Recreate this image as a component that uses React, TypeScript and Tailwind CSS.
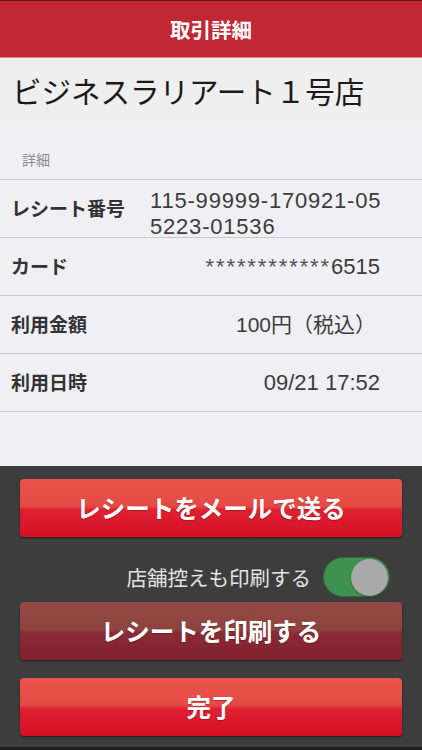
import React from "react";

const jp = { fontFamily: '"Noto Sans CJK JP", "Liberation Sans", sans-serif' };
const num = { fontFamily: '"Liberation Sans", "Noto Sans CJK JP", sans-serif' };

function Row({ label, children, align = "right" }: { label: string; children: React.ReactNode; align?: "left" | "right" }) {
  return (
    <div className="flex h-[58px] items-center border-b border-[#c8c7cc]">
      <div className="w-[150px] shrink-0 pl-[11px] text-[19px] font-bold text-[#333]" style={jp}>
        {label}
      </div>
      <div
        className={`w-[230px] shrink-0 whitespace-nowrap text-[22px] leading-[26px] text-[#3c3c3c] ${align === "left" ? "text-left" : "text-right"}`}
        style={num}
      >
        {children}
      </div>
    </div>
  );
}

function Btn({ children, dark = false }: { children: React.ReactNode; dark?: boolean }) {
  return (
    <button
      className={`mx-5 flex h-[58px] items-center justify-center rounded-[4px] text-[24.5px] font-bold text-white shadow-[0_1px_2px_rgba(0,0,0,0.5)] ${
        dark
          ? "bg-[linear-gradient(to_bottom,#934a44_0%,#8e433f_47%,#892b35_53%,#84202d_100%)]"
          : "bg-[linear-gradient(to_bottom,#e9544c_0%,#e44a43_47%,#de2131_53%,#d70f27_100%)]"
      }`}
      style={{ ...jp, textShadow: "0 1px 1px rgba(0,0,0,0.25)" }}
    >
      {children}
    </button>
  );
}

export default function App() {
  return (
    <div className="flex h-[750px] w-[422px] flex-col overflow-hidden bg-[#efeff4]" style={jp}>
      <div className="flex h-[58px] items-center justify-center border-t border-[#5a1218] border-b border-b-[#d9858a] bg-[#c22833]">
        <span className="text-[20.5px] font-bold text-white">取引詳細</span>
      </div>
      <div className="flex h-[64px] items-center bg-[#efefef] pl-[12px] text-[29.5px] text-[#1a1a1a]">
        ビジネスラリアート１号店
      </div>
      <div className="flex h-[58px] items-end border-b border-[#c8c7cc] pb-[9px] pl-[22px] text-[14px] text-[#8a8a8e]">
        詳細
      </div>
      <Row label="レシート番号" align="left">
        <div className="pt-[11px] tracking-[0.8px]">
          115-99999-170921-05
          <br />
          5223-01536
        </div>
      </Row>
      <Row label="カード">
        <span className="tracking-[1.9px] text-[#555]">************</span>6515
      </Row>
      <Row label="利用金額">
        <span className="pr-[4px] text-[21px]">100円（税込）</span>
      </Row>
      <Row label="利用日時">09/21 17:52</Row>
      <div className="flex-1" />
      <div className="flex h-[284px] flex-col border-b-[3px] border-[#1e1e1e] bg-[#3d3d3d] pt-[13px]">
        <Btn>レシートをメールで送る</Btn>
        <div className="flex h-[65px] items-center justify-end gap-[12px] pr-[32px] pt-[15px]">
          <span className="text-[20.5px] text-[#e4e4e4]">店舗控えも印刷する</span>
          <div className="flex h-[40px] w-[67px] items-center justify-end rounded-full border border-[#2f6e3c] bg-[#3f9250] pr-[1px]">
            <div className="h-[37px] w-[37px] rounded-full bg-[#a9a9a9] shadow-[0_1px_2px_rgba(0,0,0,0.3)]" />
          </div>
        </div>
        <Btn dark>レシートを印刷する</Btn>
        <div className="h-[18px]" />
        <Btn>完了</Btn>
      </div>
    </div>
  );
}
